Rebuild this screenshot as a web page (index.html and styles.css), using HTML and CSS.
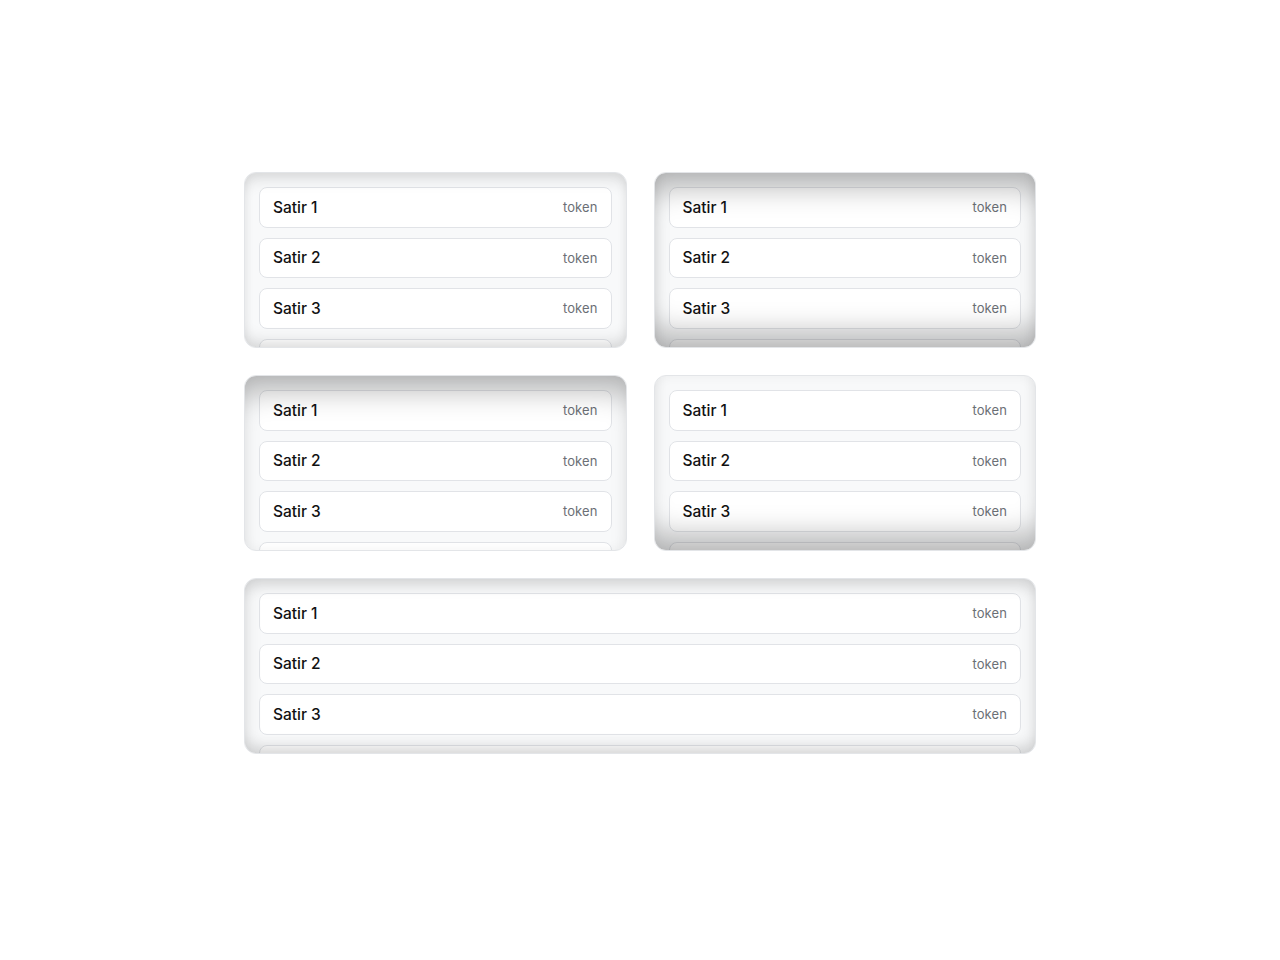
FILE: index.html
```html
<!DOCTYPE html>
<html lang="tr">
<head>
<meta charset="utf-8">
<title>Scroll shadows</title>
<link rel="stylesheet" href="styles.css">
</head>
<body>
<main class="grid">
  <section class="box soft">
    <div class="list">
      <div class="item"><span class="label">Satir 1</span><span class="token">token</span></div>
      <div class="item"><span class="label">Satir 2</span><span class="token">token</span></div>
      <div class="item"><span class="label">Satir 3</span><span class="token">token</span></div>
      <div class="item"><span class="label">Satir 4</span><span class="token">token</span></div>
      <div class="item"><span class="label">Satir 5</span><span class="token">token</span></div>
    </div>
  </section>
  <section class="box both">
    <div class="list">
      <div class="item"><span class="label">Satir 1</span><span class="token">token</span></div>
      <div class="item"><span class="label">Satir 2</span><span class="token">token</span></div>
      <div class="item"><span class="label">Satir 3</span><span class="token">token</span></div>
      <div class="item"><span class="label">Satir 4</span><span class="token">token</span></div>
      <div class="item"><span class="label">Satir 5</span><span class="token">token</span></div>
    </div>
  </section>
  <section class="box top">
    <div class="list">
      <div class="item"><span class="label">Satir 1</span><span class="token">token</span></div>
      <div class="item"><span class="label">Satir 2</span><span class="token">token</span></div>
      <div class="item"><span class="label">Satir 3</span><span class="token">token</span></div>
      <div class="item"><span class="label">Satir 4</span><span class="token">token</span></div>
      <div class="item"><span class="label">Satir 5</span><span class="token">token</span></div>
    </div>
  </section>
  <section class="box bottom">
    <div class="list">
      <div class="item"><span class="label">Satir 1</span><span class="token">token</span></div>
      <div class="item"><span class="label">Satir 2</span><span class="token">token</span></div>
      <div class="item"><span class="label">Satir 3</span><span class="token">token</span></div>
      <div class="item"><span class="label">Satir 4</span><span class="token">token</span></div>
      <div class="item"><span class="label">Satir 5</span><span class="token">token</span></div>
    </div>
  </section>
  <section class="box wide">
    <div class="list">
      <div class="item"><span class="label">Satir 1</span><span class="token">token</span></div>
      <div class="item"><span class="label">Satir 2</span><span class="token">token</span></div>
      <div class="item"><span class="label">Satir 3</span><span class="token">token</span></div>
      <div class="item"><span class="label">Satir 4</span><span class="token">token</span></div>
      <div class="item"><span class="label">Satir 5</span><span class="token">token</span></div>
    </div>
  </section>
</main>
</body>
</html>
```

FILE: styles.css
```css
html, body {
  margin: 0;
  padding: 0;
  background: #ffffff;
}

body {
  font-family: Inter, "Noto Sans", "Liberation Sans", sans-serif;
  color: #111111;
}

.grid {
  width: 792px;
  margin: 0 auto;
  padding-top: 172px;
  display: grid;
  grid-template-columns: 1fr 1fr;
  column-gap: 27px;
  row-gap: 27px;
}

.box {
  position: relative;
  height: 176px;
  box-sizing: border-box;
  border: 1px solid #e3e5e8;
  border-radius: 12px;
  background: #f8f9fa;
  overflow: hidden;
}

.box::after {
  content: "";
  position: absolute;
  inset: 0;
  border-radius: 11px;
  pointer-events: none;
}

.wide {
  grid-column: 1 / span 2;
}

.list {
  padding: 14px;
  display: flex;
  flex-direction: column;
  gap: 10px;
}

.item {
  display: flex;
  align-items: center;
  justify-content: space-between;
  height: 40.5px;
  flex: none;
  box-sizing: border-box;
  padding: 0 13px;
  background: #ffffff;
  border: 1px solid #e1e3e7;
  border-radius: 8px;
}

.label {
  font-size: 15.5px;
  font-weight: 500;
  color: #111111;
}

.token {
  font-size: 13px;
  color: #6b6f76;
  letter-spacing: 0.1px;
}

.soft::after {
  box-shadow:
    inset 0 14px 16px -8px rgba(0, 0, 0, 0.11),
    inset 0 -14px 16px -8px rgba(0, 0, 0, 0.11),
    inset 0 0 12px rgba(0, 0, 0, 0.06);
}

.both::after {
  box-shadow:
    inset 0 30px 28px -14px rgba(0, 0, 0, 0.26),
    inset 0 -30px 28px -14px rgba(0, 0, 0, 0.26),
    inset 0 0 12px rgba(0, 0, 0, 0.06);
}

.top::after {
  box-shadow:
    inset 0 30px 28px -14px rgba(0, 0, 0, 0.26),
    inset 0 0 12px rgba(0, 0, 0, 0.05);
}

.bottom::after {
  box-shadow:
    inset 0 -30px 28px -14px rgba(0, 0, 0, 0.26),
    inset 0 0 12px rgba(0, 0, 0, 0.05);
}

.wide::after {
  box-shadow:
    inset 0 14px 16px -8px rgba(0, 0, 0, 0.11),
    inset 0 -14px 16px -8px rgba(0, 0, 0, 0.11),
    inset 0 0 18px rgba(0, 0, 0, 0.1);
}
```
